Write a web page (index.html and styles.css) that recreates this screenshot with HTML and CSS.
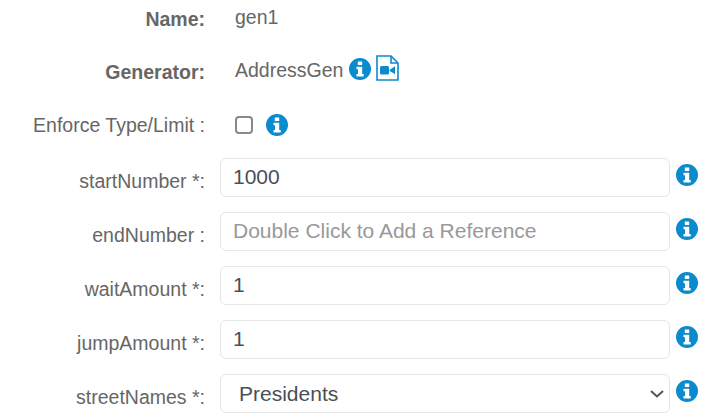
FILE: index.html
```html
<!DOCTYPE html>
<html>

<head>
    <meta charset="UTF-8">
    <title>Generator</title>
    <link rel="stylesheet" href="styles.css">
</head>

<body>
    <svg class="icon-defs" width="0" height="0">
        <symbol id="info" viewBox="0 0 22 22">
            <path fill-rule="evenodd" d="M11 0a11 11 0 1 0 0 22a11 11 0 1 0 0-22Z M8.800 3.500H13.200V7.100H8.800Z M7.500 8.800H13.200V16H14.700V18.600H7.500V16H9V11.300H7.500Z"/>
        </symbol>
    </svg>

    <form class="form">
        <div class="row row-name">
            <label class="label bold">Name:</label>
            <div class="value"><span class="value-text">gen1</span></div>
        </div>

        <div class="row row-generator">
            <label class="label bold">Generator:</label>
            <div class="value">
                <span class="value-text">AddressGen</span>
                <svg class="info info-inline"><use href="#info"/></svg>
                <svg class="video" viewBox="0 0 23 26">
                    <path class="video-page" d="M1 1H15L22 8V25H1Z"/>
                    <path class="video-page" d="M15 1V8H22"/>
                    <rect class="video-fill" x="4" y="11" width="9" height="8.500" rx="1.500"/>
                    <path class="video-fill" d="M13.500 15L19 11.300V19.200L13.500 15.800Z"/>
                </svg>
            </div>
        </div>

        <div class="row row-enforce">
            <label class="label">Enforce Type/Limit :</label>
            <div class="value">
                <input type="checkbox" class="check">
                <svg class="info info-check"><use href="#info"/></svg>
            </div>
        </div>

        <div class="row">
            <label class="label">startNumber *:</label>
            <input type="text" class="field" value="1000">
            <svg class="info"><use href="#info"/></svg>
        </div>

        <div class="row">
            <label class="label">endNumber :</label>
            <input type="text" class="field" placeholder="Double Click to Add a Reference">
            <svg class="info"><use href="#info"/></svg>
        </div>

        <div class="row">
            <label class="label">waitAmount *:</label>
            <input type="text" class="field" value="1">
            <svg class="info"><use href="#info"/></svg>
        </div>

        <div class="row">
            <label class="label">jumpAmount *:</label>
            <input type="text" class="field" value="1">
            <svg class="info"><use href="#info"/></svg>
        </div>

        <div class="row">
            <label class="label">streetNames *:</label>
            <select class="field select">
                <option>Presidents</option>
            </select>
            <svg class="info"><use href="#info"/></svg>
        </div>
    </form>
</body>

</html>
```

FILE: styles.css
```css
body {
    font-family: "Liberation Sans", Arial, sans-serif;
    margin: 0;
    padding: 0;
    background-color: white;
    color: #666;
    overflow: hidden;
}

.icon-defs {
    display: block;
}

.form {
    display: flex;
    flex-direction: column;
    gap: 15px;
}

.row {
    display: grid;
    grid-template-columns: 205px 471px 22px;
    height: 39px;
    align-items: center;
}

.row-name {
    height: 36px;
}

.row-generator {
    height: 40px;
}

.row-enforce {
    height: 37px;
}

.label {
    font-size: 19.5px;
    text-align: right;
    padding-top: 7px;
}

.row-name .label,
.row-generator .label,
.row-enforce .label {
    padding-top: 2px;
}

.bold {
    font-weight: bold;
}

.field {
    width: 450px;
    height: 39px;
    margin-left: 15px;
    box-sizing: border-box;
    border: 1px solid #e6e6e6;
    border-radius: 6px;
    padding: 0 12px 2px;
    font-family: inherit;
    font-size: 21px;
    color: #495057;
    background-color: white;
}

.field::placeholder {
    color: #999;
}

.select {
    appearance: none;
    padding: 0 18px;
    background-image: url("data:image/svg+xml,%3Csvg xmlns='http://www.w3.org/2000/svg' width='14' height='8' viewBox='0 0 14 8'%3E%3Cpath d='M1 1L7 6.500L13 1' fill='none' stroke='%23555' stroke-width='2'/%3E%3C/svg%3E");
    background-repeat: no-repeat;
    background-position: right 5px center;
}

.info {
    width: 22px;
    height: 22px;
    fill: #0a8bcd;
    margin-top: -5px;
}

.value {
    display: flex;
    align-items: center;
    margin-left: 30px;
    font-size: 19.5px;
}

.value-text {
    padding-bottom: 2px;
}

.info-inline {
    margin: -4px 0 0 6px;
    flex-shrink: 0;
}

.info-check {
    margin: 0 0 0 13px;
}

.video {
    width: 23px;
    height: 26px;
    margin-left: 5px;
    margin-top: -6px;
}

.video-page {
    fill: none;
    stroke: #0a8bcd;
    stroke-width: 1.6;
}

.video-fill {
    fill: #0a8bcd;
}

.check {
    appearance: none;
    width: 18px;
    height: 18px;
    margin: 0;
    border: 2px solid #8a8a8a;
    border-radius: 4px;
    background-color: white;
}
```
